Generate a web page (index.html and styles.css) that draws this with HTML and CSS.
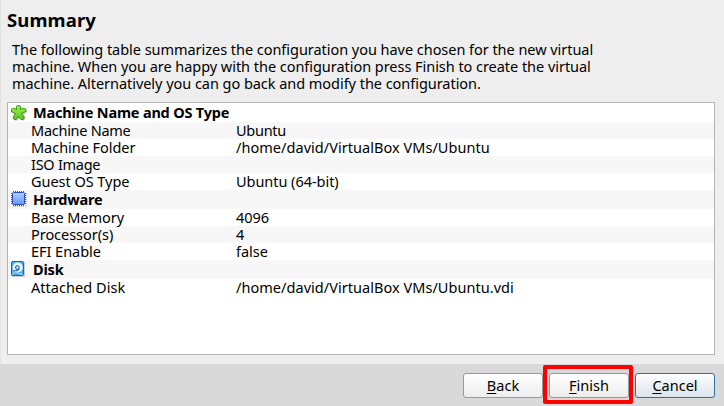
FILE: index.html
```
<!DOCTYPE html>
<html lang="en">
<head>
<meta charset="utf-8">
<title>Summary</title>
<link rel="stylesheet" href="styles.css">
</head>
<body>
<main class="page">
  <h1>Summary</h1>
  <p class="intro">The following table summarizes the configuration you have chosen for the new virtual<br>machine. When you are happy with the configuration press Finish to create the virtual<br>machine. Alternatively you can go back and modify the configuration.</p>
  <div class="tree">
    <div class="group">
      <svg class="icon" viewBox="0 0 17 17"><defs><linearGradient id="g" gradientUnits="userSpaceOnUse" x1="0" y1="1" x2="0" y2="16"><stop stop-color="#a8f04c"/><stop offset="1" stop-color="#58c41f"/></linearGradient><path id="arms" d="M7.5 8.8V3.5M7.5 8.8L2.4 6.3M7.5 8.8L12.8 6.3M7.5 8.8L4.3 13.4M7.5 8.8L11 13.4"/></defs><use href="#arms" x=".7" y=".7" stroke="#ccc" stroke-width="5"/><use href="#arms" stroke="#35951b" stroke-width="5"/><use href="#arms" stroke="url(#g)" stroke-width="3.3"/></svg>
      <b>Machine Name and OS Type</b>
    </div>
    <div class="row"><span class="snug">Machine Name</span><span class="snug">Ubuntu</span></div>
    <div class="row"><span>Machine Folder</span><span class="path">/home/david/VirtualBox VMs/Ubuntu</span></div>
    <div class="row"><span class="snug">ISO Image</span><span></span></div>
    <div class="row"><span>Guest OS Type</span><span>Ubuntu (64-bit)</span></div>
    <div class="group">
      <svg class="icon chip" viewBox="0 0 17 17"><defs><linearGradient id="b" x2="0" y2="1"><stop stop-color="#abd0ff"/><stop offset="1" stop-color="#6496fb"/></linearGradient></defs><path d="M2 15.5h13.5V2" stroke="#bbb" stroke-dasharray="1 1"/><path d="M2 .5h12M2 14.5h12M.5 2v12M14.5 2v12" stroke="#4a5ea8" stroke-dasharray="1 1"/><rect x="1.5" y="1.5" width="12" height="12" rx="1" fill="url(#b)" stroke="#2a4ec2"/></svg>
      <b>Hardware</b>
    </div>
    <div class="row"><span>Base Memory</span><span>4096</span></div>
    <div class="row"><span>Processor(s)</span><span>4</span></div>
    <div class="row"><span>EFI Enable</span><span>false</span></div>
    <div class="group">
      <svg class="icon" viewBox="0 0 17 17"><path d="M13.5 2v13.5H1" stroke="#ccc"/><rect x=".5" y=".5" width="12" height="14" rx="1" fill="#4cb0f4" stroke="#1765b5"/><circle cx="6.7" cy="6.5" r="5.1" fill="#e9f5ff"/><path d="M8.2 6.4A1.8 1.8 0 1 1 6.8 4.7Q9.4 6.3 7.5 8.7 5.5 10.3 3 9.8" stroke="#2667b0" stroke-width="1.1"/><path d="M2 12.9l2.5-2.2 3 1.6M8.5 13h2.5" stroke="#b9e5ff"/></svg>
      <b>Disk</b>
    </div>
    <div class="row"><span class="path">Attached Disk</span><span class="path">/home/david/VirtualBox VMs/Ubuntu.vdi</span></div>
  </div>
</main>
<footer class="buttons">
  <button><u>B</u>ack</button>
  <button class="finish"><u>F</u>inish</button>
  <button class="cancel"><u>C</u>ancel</button>
</footer>
</body>
</html>
```
FILE: styles.css
```
* { box-sizing: border-box; }
body {
  margin: 0;
  height: 406px;
  display: flex;
  flex-direction: column;
  background: #eee;
  color: #000;
  font: 14.5px/17px "Noto Sans", sans-serif;
  letter-spacing: -0.04px;
  overflow: hidden;
}
.page {
  height: 364px;
  padding: 8px 9px 9px 6px;
  border-left: 1px solid #e3e3df;
  display: flex;
  flex-direction: column;
}
h1 { margin: 0; font-size: 18.5px; line-height: 24px; letter-spacing: 0.1px; }
.intro { margin: 9px 0 10px 5px; white-space: nowrap; }
.tree {
  flex: 1;
  background: #fff;
  border: 1px solid #b5b5b5;
}
.group, .row { display: flex; white-space: nowrap; }
.tree > :nth-child(even) { background: #f7f7f7; }
.group { height: 19px; padding-left: 3px; line-height: 19px; letter-spacing: -0.2px; }
.icon {
  width: 17px;
  height: 17px;
  margin: 1px 5px 0 0;
  fill: none;
  stroke-linecap: round;
}
.chip { stroke-linecap: butt; }
.row { height: 17px; padding-left: 23px; }
.row span:first-child { width: 205px; }
.row .snug { letter-spacing: -0.27px; }
.row .path { letter-spacing: 0.04px; }
.buttons {
  height: 42px;
  padding: 9px 9px 0 0;
  display: flex;
  justify-content: flex-end;
  gap: 6px;
  background: #d9d9d9;
}
button {
  position: relative;
  width: 80px;
  height: 25px;
  padding: 0 0 1px 0;
  border: 1px solid #999;
  border-radius: 3px;
  background: linear-gradient(#fefefe, #ededed);
  color: #000;
  font: inherit;
  letter-spacing: 0;
}
u {
  text-decoration-thickness: 1px;
  text-underline-offset: 2px;
  text-decoration-skip-ink: none;
}
.cancel { border-color: #2d709d; background: linear-gradient(#fcfdfe, #dce4eb); }
.finish::after {
  content: "";
  position: absolute;
  inset: -9px -5px -7px -7px;
  border: 4px solid #fe0000;
  border-radius: 2px;
}
```
